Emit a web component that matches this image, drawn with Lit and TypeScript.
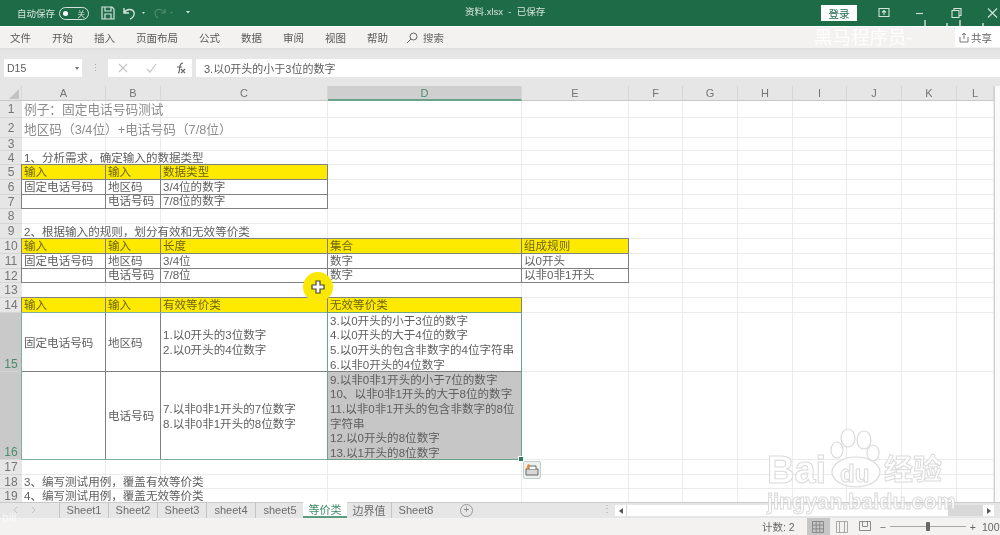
import { LitElement, html, css, svg } from 'lit';
import { customElement } from 'lit/decorators.js';

const COLS = [22, 84, 55, 167, 194, 107, 54, 55, 55, 54, 55, 55, 37];
const ROWS = [15, 17, 20, 13, 14, 15, 15, 14, 15, 15, 15, 15, 14, 15, 15, 59, 88, 15, 14, 14];
const LETTERS = ['A', 'B', 'C', 'D', 'E', 'F', 'G', 'H', 'I', 'J', 'K', 'L'];

type Cell = { t: string[]; cls?: string };

const y = (s: string): Cell => ({ t: [s], cls: 'b yellow' });
const b = (...t: string[]): Cell => ({ t, cls: 'b' });
const m = (...t: string[]): Cell => ({ t, cls: 'b mid' });

// key is row then column, A = 1
const CELLS: Record<string, Cell> = {
  '1,1': { t: ['例子：固定电话号码测试'], cls: 'big' },
  '2,1': { t: ['地区码（3/4位）+电话号码（7/8位）'], cls: 'big' },
  '4,1': { t: ['1、分析需求，确定输入的数据类型'], cls: 'low' },
  '5,1': y('输入'), '5,2': y('输入'), '5,3': y('数据类型'),
  '6,1': b('固定电话号码'), '6,2': b('地区码'), '6,3': b('3/4位的数字'),
  '7,1': b(), '7,2': b('电话号码'), '7,3': b('7/8位的数字'),
  '9,1': { t: ['2、根据输入的规则，划分有效和无效等价类'], cls: 'low' },
  '10,1': y('输入'), '10,2': y('输入'), '10,3': y('长度'), '10,4': y('集合'), '10,5': y('组成规则'),
  '11,1': b('固定电话号码'), '11,2': b('地区码'), '11,3': b('3/4位'), '11,4': b('数字'), '11,5': b('以0开头'),
  '12,1': b(), '12,2': b('电话号码'), '12,3': b('7/8位'), '12,4': b('数字'), '12,5': b('以非0非1开头'),
  '14,1': y('输入'), '14,2': y('输入'), '14,3': y('有效等价类'), '14,4': y('无效等价类'),
  '15,1': m('固定电话号码'), '15,2': m('地区码'),
  '15,3': m('1.以0开头的3位数字', '2.以0开头的4位数字'),
  '15,4': m('3.以0开头的小于3位的数字', '4.以0开头的大于4位的数字', '5.以0开头的包含非数字的4位字符串', '6.以非0开头的4位数字'),
  '16,1': m(), '16,2': m('电话号码'),
  '16,3': m('7.以非0非1开头的7位数字', '8.以非0非1开头的8位数字'),
  '16,4': {
    t: ['9.以非0非1开头的小于7位的数字', '10、以非0非1开头的大于8位的数字', '11.以非0非1开头的包含非数字的8位', '字符串', '12.以0开头的8位数字', '13.以1开头的8位数字'],
    cls: 'b mid grey',
  },
  '18,1': { t: ['3、编写测试用例，覆盖有效等价类'], cls: 'low' },
  '19,1': { t: ['4、编写测试用例，覆盖无效等价类'], cls: 'low' },
};

const MENU = ['文件', '开始', '插入', '页面布局', '公式', '数据', '审阅', '视图', '帮助'];
const TABS = ['Sheet1', 'Sheet2', 'Sheet3', 'sheet4', 'sheet5', '等价类', '边界值', 'Sheet8'];

@customElement('app-root')
export class AppRoot extends LitElement {
  static styles = css`
    :host {
      display: block;
      position: relative;
      width: 1000px;
      height: 535px;
      overflow: hidden;
      background: #fff;
      font-family: "Liberation Sans", "Noto Sans CJK SC", sans-serif;
      filter: blur(0.6px);
    }
    .title {
      height: 26px;
      background: #1e6b47;
      color: #d5e4dc;
      font-size: 9.5px;
      display: flex;
      align-items: center;
      padding-left: 17px;
      position: relative;
    }
    .toggle {
      width: 22px;
      height: 11px;
      border: 1px solid #d5e4dc;
      border-radius: 7px;
      margin-left: 4px;
      display: flex;
      align-items: center;
      justify-content: space-between;
      padding: 0 3px;
      font-size: 7.5px;
    }
    .toggle i {
      width: 5px;
      height: 5px;
      background: #fff;
      border-radius: 50%;
    }
    .qa {
      display: flex;
      align-items: center;
      margin-left: 12px;
    }
    .doc {
      position: absolute;
      left: 465px;
      top: 5px;
      font-size: 9.5px;
      line-height: 14px;
    }
    .login {
      position: absolute;
      left: 821px;
      top: 5px;
      width: 36px;
      height: 16px;
      background: #fff;
      color: #1e6b47;
      font-size: 10.5px;
      display: flex;
      align-items: center;
      justify-content: center;
    }
    .win {
      position: absolute;
      left: 877px;
      top: 6px;
    }
    .menu {
      height: 23px;
      margin-top: 1px;
      box-sizing: border-box;
      padding: 0 0 2px 10px;
      background: #f3f2f1;
      color: #5a5a5a;
      font-size: 10.5px;
      display: flex;
      align-items: center;
      gap: 21px;
      box-shadow: inset 0 -2px 0 #e0e0e0;
    }
    .search {
      display: flex;
      align-items: center;
      gap: 5px;
      margin-left: -3px;
      color: #666;
    }
    .share {
      position: absolute;
      left: 955px;
      top: 27px;
      width: 45px;
      height: 20px;
      background: #fff;
      color: #666;
      font-size: 10.5px;
      display: flex;
      align-items: center;
      padding-left: 4px;
      gap: 2px;
      box-sizing: border-box;
    }
    .fbar {
      height: 36px;
      box-sizing: border-box;
      padding: 9px 0 9px 4px;
      background: #e6e6e6;
      display: flex;
      color: #5c5c5c;
      font-size: 11px;
    }
    .fbar > div {
      background: #fff;
      display: flex;
      align-items: center;
    }
    .name {
      width: 78px;
      box-sizing: border-box;
      padding: 0 3px;
      justify-content: space-between;
      font-size: 10.5px;
    }
    .caret {
      border: 2.5px solid transparent;
      border-top: 3px solid #777;
      border-bottom: 0;
    }
    .fbar .dots {
      width: 26px;
      background: none;
      justify-content: center;
      color: #aaa;
      font-size: 9px;
    }
    .btns {
      width: 84px;
      box-sizing: border-box;
      padding-left: 9px;
    }
    .input {
      flex: 1;
      margin-left: 4px;
      padding-left: 8px;
    }
    .body {
      display: flex;
      height: 416px;
    }
    .sheet {
      display: grid;
      width: 994px;
      overflow: hidden;
    }
    .vbar {
      flex: 1;
      background: #fafafa;
      border-left: 1px solid #cfcfcf;
    }
    .head,
    .rownum {
      background: #e6e6e6;
      color: #757575;
      font-size: 11px;
      display: flex;
      align-items: center;
      justify-content: center;
      box-sizing: border-box;
    }
    .head {
      border-right: 1px solid #d6d6d6;
      border-bottom: 1px solid #c8c8c8;
    }
    .head.on {
      background: #cfcfcf;
      color: #4c8a6e;
      border-bottom: 2px solid #6aa38a;
    }
    .corner {
      padding: 3px 2px 1px 10px;
      justify-content: flex-end;
    }
    .corner i {
      width: 0;
      height: 0;
      border-left: 10px solid transparent;
      border-bottom: 10px solid #c2c2c2;
    }
    .rownum {
      border-bottom: 1px solid #d6d6d6;
      font-size: 12px;
    }
    .rownum.on {
      background: #c9c9c9;
      color: #4c8a6e;
      align-items: flex-end;
    }
    .cell {
      box-sizing: border-box;
      border-right: 1px solid #ebebeb;
      border-bottom: 1px solid #ebebeb;
      color: #5e5e5e;
      font-size: 11.55px;
      line-height: 14.6px;
      white-space: nowrap;
      padding-left: 2px;
      display: flex;
      flex-direction: column;
      justify-content: flex-end;
    }
    .cell > div {
      transform: translateY(1px);
    }
    .cell.low > div {
      transform: translateY(2px);
    }
    .cell.big {
      font-size: 12.7px;
      color: #8c8c8c;
    }
    .cell.b {
      border: 1px solid #808080;
      margin: -1px 0 0 -1px;
    }
    .cell.yellow {
      background: #fdea00;
      color: #6e6410;
    }
    .cell.mid {
      justify-content: center;
    }
    .cell.grey {
      background: #c6c6c6;
    }
    .sel-all {
      border: 1px solid #7fb09b;
      margin: -1px 0 0 -1px;
    }
    .sel {
      border: 1px solid #6aa38a;
      margin: -1px 0 0 -1px;
      position: relative;
    }
    .handle {
      position: absolute;
      right: -3px;
      bottom: -3px;
      width: 4px;
      height: 4px;
      background: #2f7d5a;
      border: 1px solid #fff;
    }
    .paste {
      position: absolute;
      left: 523px;
      top: 461px;
      width: 18px;
      height: 18px;
      box-sizing: border-box;
      background: #eef0ef;
      border: 1px solid #bcd0c6;
      border-radius: 2px;
    }
    .tabs {
      height: 16px;
      background: #e6e6e6;
      display: flex;
      align-items: stretch;
      color: #6c6c6c;
      font-size: 11px;
      padding-left: 59px;
      box-sizing: border-box;
      position: relative;
      box-shadow: inset 0 1px 0 #c9c9c9;
    }
    .tab {
      width: 49px;
      display: flex;
      align-items: center;
      justify-content: center;
      box-sizing: border-box;
      border-left: 1px solid #c4c4c4;
    }
    .tab:last-of-type {
      border-right: 1px solid #c4c4c4;
    }
    .tab.on {
      background: #fff;
      color: #3f8a68;
      border-left: 0;
      border-bottom: 2px solid #5e9c80;
      width: 44px;
      margin-left: -1px;
    }
    .tab.on + .tab {
      border-left: 0;
      width: 44px;
    }
    .nav {
      position: absolute;
      left: 12px;
      top: 4px;
    }
    .plus {
      position: absolute;
      left: 460px;
      top: 2px;
      width: 11px;
      height: 11px;
      border: 1px solid #999;
      border-radius: 50%;
      color: #888;
      font-size: 10px;
      line-height: 10px;
      text-align: center;
    }
    .more {
      position: absolute;
      left: 602px;
      top: 1px;
      color: #aaa;
      font-size: 10px;
    }
    .hscroll {
      position: absolute;
      left: 615px;
      top: 3px;
      right: 6px;
      bottom: 2px;
      display: flex;
      gap: 1px;
      background: #d8d8d8;
    }
    .hscroll .btn {
      width: 11px;
      background: #fff;
      display: flex;
      align-items: center;
      justify-content: center;
    }
    .hscroll .thumb {
      width: 321px;
      background: #fff;
    }
    .hscroll .rest {
      flex: 1;
    }
    .arrow-l {
      border: 3px solid transparent;
      border-right: 4px solid #555;
      border-left: 0;
    }
    .arrow-r {
      border: 3px solid transparent;
      border-left: 4px solid #555;
      border-right: 0;
    }
    .status {
      height: 17px;
      background: #f3f2f1;
      display: flex;
      align-items: center;
      color: #666;
      font-size: 10.5px;
      padding-left: 762px;
      white-space: nowrap;
    }
    .views {
      display: flex;
      align-items: center;
      height: 17px;
      margin-left: 12px;
    }
    .views .v {
      width: 23px;
      height: 17px;
      display: flex;
      align-items: center;
      justify-content: center;
    }
    .views .v.on {
      background: #c6c6c6;
      margin-right: 1px;
    }
    .zoom {
      display: flex;
      align-items: center;
      margin-left: 3px;
      flex-shrink: 0;
    }
    .slider {
      width: 76px;
      height: 1px;
      background: #a8a8a8;
      margin: 0 4px;
      position: relative;
    }
    .slider i {
      position: absolute;
      left: 36px;
      top: -4px;
      width: 4px;
      height: 9px;
      background: #666;
      border-radius: 1px;
    }
    .pct {
      margin-left: 6px;
    }
    .spot {
      position: absolute;
      left: 303px;
      top: 272px;
      width: 30px;
      height: 30px;
      border-radius: 50%;
      background: #fbe800;
      display: flex;
      align-items: center;
      justify-content: center;
    }
    .mark {
      position: absolute;
      left: 814px;
      top: 26px;
      color: rgba(255, 255, 255, 0.85);
      font-size: 18.5px;
      line-height: 24px;
      white-space: nowrap;
    }
    .ticks {
      position: absolute;
      left: 920px;
      top: 18px;
    }
    .bili {
      position: absolute;
      left: 2px;
      top: 511px;
      color: rgba(255, 255, 255, 0.6);
      font-size: 12px;
      line-height: 14px;
      white-space: nowrap;
    }
    .baidu {
      position: absolute;
      left: 765px;
      top: 428px;
      width: 185px;
      height: 90px;
    }
    .baidu span {
      position: absolute;
      color: rgba(255, 255, 255, 0.75);
      -webkit-text-stroke: 1px #dadada;
      white-space: nowrap;
      font-weight: 700;
    }
    .bai { left: 2px; top: 20px; font-size: 38px; line-height: 44px; }
    .du { left: 75px; top: 32px; font-size: 24px; line-height: 28px; }
    .jy { left: 119px; top: 24px; font-size: 29px; line-height: 36px; }
    .url { left: 2px; top: 61px; font-size: 21.5px; line-height: 26px; }
  `;

  renderCell(r: number, c: number) {
    const cell = CELLS[`${r},${c}`];
    return html`<div
      class="cell ${cell?.cls ?? ''}"
      style="grid-area:${r + 1}/${c + 1}"
    >${cell?.t.map((l) => html`<div>${l}</div>`)}</div>`;
  }

  renderSheet() {
    const rows = ROWS.slice(1).map((_, i) => i + 1);
    return html`
      <div
        class="sheet"
        style="grid-template-columns:${COLS.map((w) => w + 'px').join(' ')};grid-template-rows:${ROWS.map((h) => h + 'px').join(' ')}"
      >
        <div class="head corner" style="grid-area:1/1"><i></i></div>
        ${LETTERS.map(
          (l, i) => html`<div class="head ${l === 'D' ? 'on' : ''}" style="grid-area:1/${i + 2}">${l}</div>`,
        )}
        ${rows.map(
          (r) => html`<div class="rownum ${r === 15 || r === 16 ? 'on' : ''}" style="grid-area:${r + 1}/1">${r}</div>`,
        )}
        ${rows.map((r) => LETTERS.map((_, i) => this.renderCell(r, i + 1)))}
        <div class="sel-all" style="grid-area:16/2/18/6"></div>
        <div class="sel" style="grid-area:16/5/18/6"><div class="handle"></div></div>
      </div>
    `;
  }

  render() {
    return html`
      <div class="title">
        自动保存
        <div class="toggle"><i></i>关</div>
        <div class="qa">
          <svg width="90" height="16" viewBox="0 0 90 16" fill="none" stroke="#d5e4dc" stroke-width="1.2">
            <path d="M1 2h10l2 2v10H1z M4 2v4h6V2 M4 14V9h6v5" />
            <path d="M23 3v5h5 M23 8c2-4 8-5 10-1 1 3-1 6-4 7" stroke-width="1.4" />
            <path d="M41 7h3l-1.5 2z" fill="#d5e4dc" stroke="none" />
            <path d="M64 4v4h-4 M64 8c-2-4-8-5-10-1 0 3 1 5 3 6" stroke="#4f8a6d" />
            <path d="M69 7h3l-1.5 2z" fill="#4f8a6d" stroke="none" />
            <path d="M85 6h4l-2 2.5z" fill="#d5e4dc" stroke="none" />
          </svg>
        </div>
        <div class="doc">资料.xlsx &nbsp;-&nbsp; 已保存</div>
        <div class="login">登录</div>
        <svg class="win" width="122" height="14" viewBox="0 0 122 14" fill="none" stroke="#d5e4dc" stroke-width="1.1">
          <path d="M2 2.5h10v8H2z M7 9V5 M5 6.5l2-2 2 2" />
          <path d="M39 7.5h7" />
          <path d="M75 4.5h7v7h-7z M77 4.5V2.5h7v7h-2" />
          <path d="M111 2.5l9 9 M120 2.5l-9 9" />
        </svg>
      </div>
      <div class="menu">
        ${MENU.map((m) => html`<span>${m}</span>`)}
        <span class="search">
          <svg width="12" height="12" viewBox="0 0 12 12" fill="none" stroke="#666" stroke-width="1">
            <circle cx="7.5" cy="4.5" r="3.5" />
            <path d="M5 7l-4 4" />
          </svg>
          搜索
        </span>
      </div>
      <div class="share">
        <svg width="10" height="11" viewBox="0 0 10 11" fill="none" stroke="#777">
          <path d="M1 5v5h8V5 M5 7V1 M3 3l2-2 2 2" />
        </svg>
        共享
      </div>
      <div class="fbar">
        <div class="name">D15<i class="caret"></i></div>
        <div class="dots">⋮</div>
        <div class="btns">
          <svg width="70" height="14" viewBox="0 0 70 14" fill="none" stroke="#c4c4c4" stroke-width="1.2">
            <path d="M2 3l8 8 M10 3l-8 8" />
            <path d="M30 8l3 3 6-8" />
            <path d="M61 12c2 0 1-3 2-7 .4-2 1-3 3-3 M60 6h5 M64 8l4 4 M68 8l-4 4" stroke="#666" />
          </svg>
        </div>
        <div class="input">3.以0开头的小于3位的数字</div>
      </div>
      <div class="body">
        ${this.renderSheet()}
        <div class="vbar"></div>
      </div>
      <div class="tabs">
        <svg class="nav" width="26" height="8" viewBox="0 0 26 8" fill="none" stroke="#c4c4c4">
          <path d="M5 1L2 4l3 3 M20 1l3 3-3 3" />
        </svg>
        ${TABS.map((t) => html`<div class="tab ${t === '等价类' ? 'on' : ''}">${t}</div>`)}
        <div class="plus">+</div>
        <div class="more">⋮</div>
        <div class="hscroll">
          <div class="btn"><i class="arrow-l"></i></div>
          <div class="thumb"></div>
          <div class="rest"></div>
          <div class="btn"><i class="arrow-r"></i></div>
        </div>
      </div>
      <div class="status">
        计数: 2
        <div class="views">
          <div class="v on">
            <svg width="12" height="12" viewBox="0 0 12 12" fill="none" stroke="#8a8a8a">
              <path d="M.5.5h11v11H.5z M4.2.5v11 M7.8.5v11 M.5 4.2h11 M.5 7.8h11" />
            </svg>
          </div>
          <div class="v">
            <svg width="12" height="12" viewBox="0 0 12 12" fill="none" stroke="#a8a8a8">
              <path d="M.5.5h11v11H.5z M3.5.5v11 M8.5.5v11" />
            </svg>
          </div>
          <div class="v">
            <svg width="12" height="12" viewBox="0 0 12 12" fill="none" stroke="#8a8a8a">
              <path d="M.5.5h11v9H.5z M3.5.5v5h5v-5" />
            </svg>
          </div>
        </div>
        <div class="zoom">
          <span>−</span>
          <div class="slider"><i></i></div>
          <span>+</span>
          <span class="pct">100%</span>
        </div>
      </div>

      <div class="paste">
        <svg width="16" height="16" viewBox="0 0 16 16" fill="none">
          <path d="M2 7h12v6H2z" fill="#d8d8d8" stroke="#666" />
          <path d="M5 7V4h7v3" stroke="#666" fill="#fff" />
          <path d="M2 7l2-5 2 1-2 4z" fill="#f08a24" />
        </svg>
      </div>
      <div class="spot">
        <svg width="14" height="14" viewBox="0 0 14 14">
          <path d="M5 1h4v4h4v4H9v4H5V9H1V5h4z" fill="#fff" stroke="#444" stroke-width="1.2" />
        </svg>
      </div>
      <div class="mark">黑马程序员-</div>
      <svg class="ticks" width="70" height="10" viewBox="0 0 70 10" stroke="rgba(255,255,255,.75)" stroke-width="1.5">
        <path d="M5 2v7 M27 5v4 M40 2v7 M63 5v4" />
      </svg>
      <div class="bili">bili</div>
      <div class="baidu">
        <span class="bai">Bai</span>
        <svg width="185" height="90" viewBox="0 0 185 90" style="position:absolute;left:0;top:0">
          ${svg`<g fill="rgba(255,255,255,.7)" stroke="#dadada" stroke-width="1.2">
            <ellipse cx="83" cy="10" rx="7" ry="9" />
            <ellipse cx="99" cy="12" rx="7" ry="9" />
            <ellipse cx="72" cy="22" rx="6" ry="8" />
            <ellipse cx="108" cy="25" rx="6" ry="8" />
            <ellipse cx="91" cy="44" rx="24" ry="15" />
          </g>`}
        </svg>
        <span class="du">du</span>
        <span class="jy">经验</span>
        <span class="url">jingyan.baidu.com</span>
      </div>
    `;
  }
}
